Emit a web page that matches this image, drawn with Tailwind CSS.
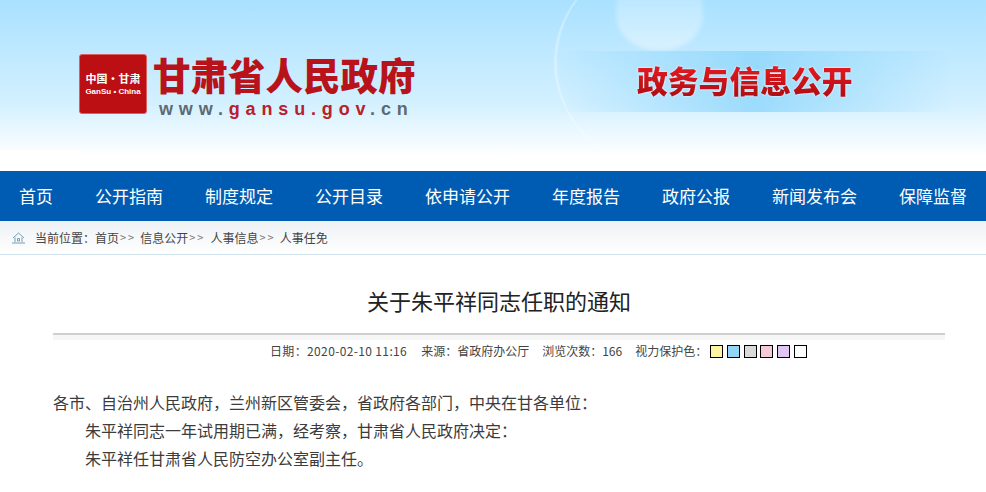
<!DOCTYPE html>
<html lang="zh-CN">
<head>
  <meta charset="UTF-8" />
  <title>关于朱平祥同志任职的通知</title>
  <script src="https://cdn.jsdelivr.net/npm/@tailwindcss/browser@4"></script>
</head>
<body class="bg-white overflow-hidden font-['Noto_Sans_CJK_SC',sans-serif]">
  <!-- header banner -->
  <header class="relative h-[171px] overflow-hidden bg-gradient-to-b from-[#a9e1ff] via-[#d3f0ff] via-60% to-white to-92%">
    <!-- decoration on the right -->
    <div class="absolute left-[554px] top-[-40px] w-[210px] h-[205px] rounded-full border-l-[3px] border-white/30"></div>
    <div class="absolute left-[616px] top-[-28px] w-[87px] h-[78px] rounded-[45%] bg-gradient-to-b from-white/15 to-white/40 blur-[2px]"></div>
    <div class="absolute left-[555px] right-[30px] top-[51px] h-[61px] bg-gradient-to-r from-transparent via-[#8dd6fb]/80 to-transparent"></div>
    <div class="absolute left-0 top-[150px] w-[79px] h-[21px] bg-white"></div>

    <div class="relative flex items-start pl-[79px] pt-[51px]">
      <!-- logo seal -->
      <div class="mt-[3px] w-[68px] h-[60px] rounded-[3px] bg-[#bb0f14] border border-[#d9605f] flex flex-col items-center justify-center text-white font-bold">
        <span class="text-[11px] leading-[14px] mt-[2px]">中国·甘肃</span>
        <span class="text-[8px] leading-[14px] font-['Liberation_Sans',sans-serif] whitespace-nowrap">GanSu • China</span>
      </div>
      <div class="ml-[6px] flex flex-col">
        <h1 class="text-[37.5px] leading-[45px] font-black text-[#b8131b] whitespace-nowrap">甘肃省人民政府</h1>
        <div class="ml-[6px] mt-[3px] text-[18px] leading-[20px] font-bold tracking-[5.85px] font-['Liberation_Sans',sans-serif] whitespace-nowrap text-[#b8202a]"><span class="text-[#5d6a70]">www.</span>gansu.gov<span class="text-[#5d6a70]">.cn</span></div>
      </div>
      <div class="absolute left-[637px] top-[60px] text-[30.8px] leading-[40px] font-black whitespace-nowrap bg-gradient-to-b from-[#f01c22] to-[#a80d12] bg-clip-text text-transparent drop-shadow-[0_0_1px_#ffffff]">政务与信息公开</div>
    </div>
  </header>

  <!-- main nav -->
  <nav class="h-[50px] bg-[#005cb3] flex items-center gap-[42px] pl-[19px] text-[17px] text-white whitespace-nowrap">
    <a href="#">首页</a>
    <a href="#">公开指南</a>
    <a href="#">制度规定</a>
    <a href="#">公开目录</a>
    <a href="#">依申请公开</a>
    <a href="#">年度报告</a>
    <a href="#">政府公报</a>
    <a href="#">新闻发布会</a>
    <a href="#">保障监督</a>
  </nav>

  <!-- breadcrumb -->
  <div class="h-[34px] bg-gradient-to-b from-[#eef2f5] to-white border-b border-[#cfe1ea] flex items-center pl-[12px] text-[12px] text-[#444] whitespace-nowrap">
    <svg class="w-[13px] h-[12px] mr-[10px]" viewBox="0 0 13 12" fill="none" stroke="#6f9fb5" stroke-width="1">
      <path d="M1 6 6.5 1 12 6M3 5.5V10M10 5.5V10M5.5 6.5h2V9h-2zM0 11h13"/>
    </svg>
    <span>当前位置：首页</span>
    <span class="text-[#777] text-[11px] tracking-[2px] ml-[1px] mr-[4px]">&gt;&gt;</span>
    <span>信息公开</span>
    <span class="text-[#777] text-[11px] tracking-[2px] ml-[1px] mr-[5px]">&gt;&gt;</span>
    <span>人事信息</span>
    <span class="text-[#777] text-[11px] tracking-[2px] ml-[1px] mr-[4px]">&gt;&gt;</span>
    <span>人事任免</span>
  </div>

  <main class="pl-[53px] pr-[41px]">
    <h2 class="pt-[30px] text-center text-[22px] leading-[30px] text-[#222]">关于朱平祥同志任职的通知</h2>
    <div class="mt-[18px] h-[7px] border-t-2 border-[#cfcfcf] bg-[#f6f6f6]"></div>

    <!-- article info -->
    <div class="mt-[2px] pl-[217px] flex items-center text-[12px] leading-[18px] text-[#444] whitespace-nowrap">
      <span class="tracking-[0.36px]">日期：2020-02-10 11:16</span>
      <span class="ml-[14px]">来源：省政府办公厅</span>
      <span class="ml-[13px]">浏览次数：166</span>
      <span class="ml-[13px]">视力保护色：</span>
      <div class="ml-[3px] flex gap-[3.7px]">
        <span class="w-[13px] h-[13px] border border-black bg-[#fdf5a3]"></span>
        <span class="w-[13px] h-[13px] border border-black bg-[#93d6f6]"></span>
        <span class="w-[13px] h-[13px] border border-black bg-[#d9d9d9]"></span>
        <span class="w-[13px] h-[13px] border border-black bg-[#f7c9d8]"></span>
        <span class="w-[13px] h-[13px] border border-black bg-[#e0c6f5]"></span>
        <span class="w-[13px] h-[13px] border border-black bg-white"></span>
      </div>
    </div>

    <div class="mt-[28px] text-[16px] leading-[28px] text-[#3c3c3c]">
      <p>各市、自治州人民政府，兰州新区管委会，省政府各部门，中央在甘各单位：</p>
      <p class="indent-[32px]">朱平祥同志一年试用期已满，经考察，甘肃省人民政府决定：</p>
      <p class="indent-[32px]">朱平祥任甘肃省人民防空办公室副主任。</p>
    </div>
  </main>
</body>
</html>
